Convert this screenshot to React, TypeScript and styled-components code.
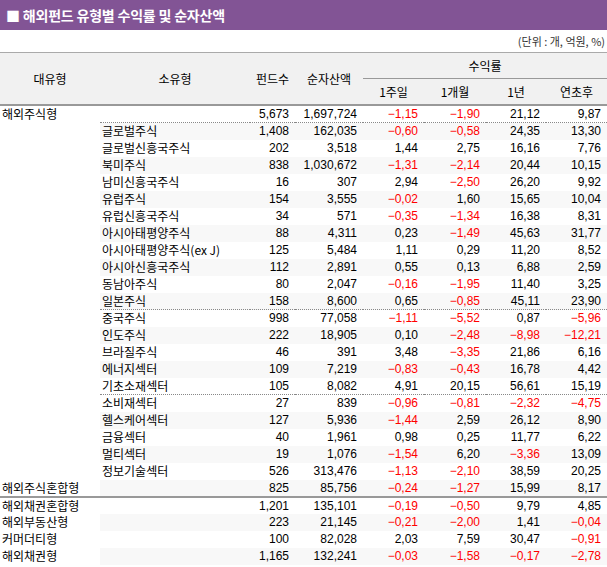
import React from "react";
import styled, { createGlobalStyle } from "styled-components";

const Global = createGlobalStyle`
  body { margin: 0; background: #fff; font-family: "Noto Sans CJK KR", "Liberation Sans", sans-serif; }
`;

const Page = styled.div`width: 607px;`;
const TitleBar = styled.div`
  height: 30px; background: #825495; color: #fff; font-weight: bold; font-size: 14px;
  display: flex; align-items: center; padding-left: 6px; box-sizing: border-box; letter-spacing: -0.2px;
`;
const Unit = styled.div`
  height: 22px; font-size: 11px; color: #333; text-align: right; padding-right: 2px; line-height: 22px;
`;
const Table = styled.table`
  width: 607px; border-collapse: collapse; table-layout: fixed; font-size: 12px; color: #000;
`;
const Th = styled.th<{ $line?: boolean }>`
  background: #f1f1f1; font-weight: normal; height: 25px; padding: 0;
  border-bottom: ${(p) => (p.$line ? "1px solid #999" : "none")};
`;
const HeadRow = styled.tr`border-top: 1px solid #aaa;`;
const HeadRow2 = styled.tr`border-bottom: 2px solid #999;`;
const Tr = styled.tr<{ $sep?: "dot" | "solid" }>`
  height: 17px;
  ${(p) => (p.$sep === "solid" ? "border-bottom: 2px solid #999;" : "")}
`;
const Td = styled.td<{ $num?: boolean; $neg?: boolean; $shade?: boolean; $dot?: boolean }>`
  padding: 0 ${(p) => (p.$num ? "6px" : "0")} 0 ${(p) => (p.$num ? "0" : "2px")};
  text-align: ${(p) => (p.$num ? "right" : "left")};
  color: ${(p) => (p.$neg ? "#ff0000" : "#000")};
  background: ${(p) => (p.$shade ? "#f8f8f8" : "#fff")};
  border-bottom: ${(p) => (p.$dot ? "1px dotted #888" : "none")};
  white-space: nowrap; line-height: 16px; font-family: ${(p) => (p.$num ? '"Liberation Sans", sans-serif' : 'inherit')};
`;

type Row = [string, string, string, string, string, string, string, string];
const rows: Row[] = [
  ["해외주식형", "", "5,673", "1,697,724", "-1,15", "-1,90", "21,12", "9,87"],
  ["", "글로벌주식", "1,408", "162,035", "-0,60", "-0,58", "24,35", "13,30"],
  ["", "글로벌신흥국주식", "202", "3,518", "1,44", "2,75", "16,16", "7,76"],
  ["", "북미주식", "838", "1,030,672", "-1,31", "-2,14", "20,44", "10,15"],
  ["", "남미신흥국주식", "16", "307", "2,94", "-2,50", "26,20", "9,92"],
  ["", "유럽주식", "154", "3,555", "-0,02", "1,60", "15,65", "10,04"],
  ["", "유럽신흥국주식", "34", "571", "-0,35", "-1,34", "16,38", "8,31"],
  ["", "아시아태평양주식", "88", "4,311", "0,23", "-1,49", "45,63", "31,77"],
  ["", "아시아태평양주식(ex J)", "125", "5,484", "1,11", "0,29", "11,20", "8,52"],
  ["", "아시아신흥국주식", "112", "2,891", "0,55", "0,13", "6,88", "2,59"],
  ["", "동남아주식", "80", "2,047", "-0,16", "-1,95", "11,40", "3,25"],
  ["", "일본주식", "158", "8,600", "0,65", "-0,85", "45,11", "23,90"],
  ["", "중국주식", "998", "77,058", "-1,11", "-5,52", "0,87", "-5,96"],
  ["", "인도주식", "222", "18,905", "0,10", "-2,48", "-8,98", "-12,21"],
  ["", "브라질주식", "46", "391", "3,48", "-3,35", "21,86", "6,16"],
  ["", "에너지섹터", "109", "7,219", "-0,83", "-0,43", "16,78", "4,42"],
  ["", "기초소재섹터", "105", "8,082", "4,91", "20,15", "56,61", "15,19"],
  ["", "소비재섹터", "27", "839", "-0,96", "-0,81", "-2,32", "-4,75"],
  ["", "헬스케어섹터", "127", "5,936", "-1,44", "2,59", "26,12", "8,90"],
  ["", "금융섹터", "40", "1,961", "0,98", "0,25", "11,77", "6,22"],
  ["", "멀티섹터", "19", "1,076", "-1,54", "6,20", "-3,36", "13,09"],
  ["", "정보기술섹터", "526", "313,476", "-1,13", "-2,10", "38,59", "20,25"],
  ["해외주식혼합형", "", "825", "85,756", "-0,24", "-1,27", "15,99", "8,17"],
  ["해외채권혼합형", "", "1,201", "135,101", "-0,19", "-0,50", "9,79", "4,85"],
  ["해외부동산형", "", "223", "21,145", "-0,21", "-2,00", "1,41", "-0,04"],
  ["커머더티형", "", "100", "82,028", "2,03", "7,59", "30,47", "-0,91"],
  ["해외채권형", "", "1,165", "132,241", "-0,03", "-1,58", "-0,17", "-2,78"],
];
const dotAfter = new Set([0, 11, 16]);

export default function App() {
  return (
    <Page>
      <Global />
      <TitleBar>■ 해외펀드 유형별 수익률 및 순자산액</TitleBar>
      <Unit>(단위 : 개, 억원, %)</Unit>
      <Table>
        <colgroup>
          <col style={{ width: 100 }} /><col style={{ width: 150 }} /><col style={{ width: 45 }} />
          <col style={{ width: 68 }} /><col style={{ width: 61 }} /><col style={{ width: 62 }} />
          <col style={{ width: 60 }} /><col style={{ width: 61 }} />
        </colgroup>
        <thead>
          <HeadRow>
            <Th rowSpan={2}>대유형</Th><Th rowSpan={2}>소유형</Th><Th rowSpan={2}>펀드수</Th><Th rowSpan={2}>순자산액</Th>
            <Th colSpan={4} $line>수익률</Th>
          </HeadRow>
          <HeadRow2>
            <Th>1주일</Th><Th>1개월</Th><Th>1년</Th><Th>연초후</Th>
          </HeadRow2>
        </thead>
        <tbody>
          {rows.map((r, i) => {
            const shade = i <= 16 ? i % 2 === 1 : i % 2 === 0;
            const dot = dotAfter.has(i);
            return (
              <Tr key={i} $sep={i === 22 ? "solid" : undefined}>
                <Td>{r[0]}</Td>
                <Td $shade={shade} $dot={dot}>{r[1]}</Td>
                {r.slice(2).map((v, j) => (
                  <Td key={j} $num $shade={shade} $dot={dot} $neg={v.startsWith("-")}>
                    {v.replace("-", "−")}
                  </Td>
                ))}
              </Tr>
            );
          })}
        </tbody>
      </Table>
    </Page>
  );
}
